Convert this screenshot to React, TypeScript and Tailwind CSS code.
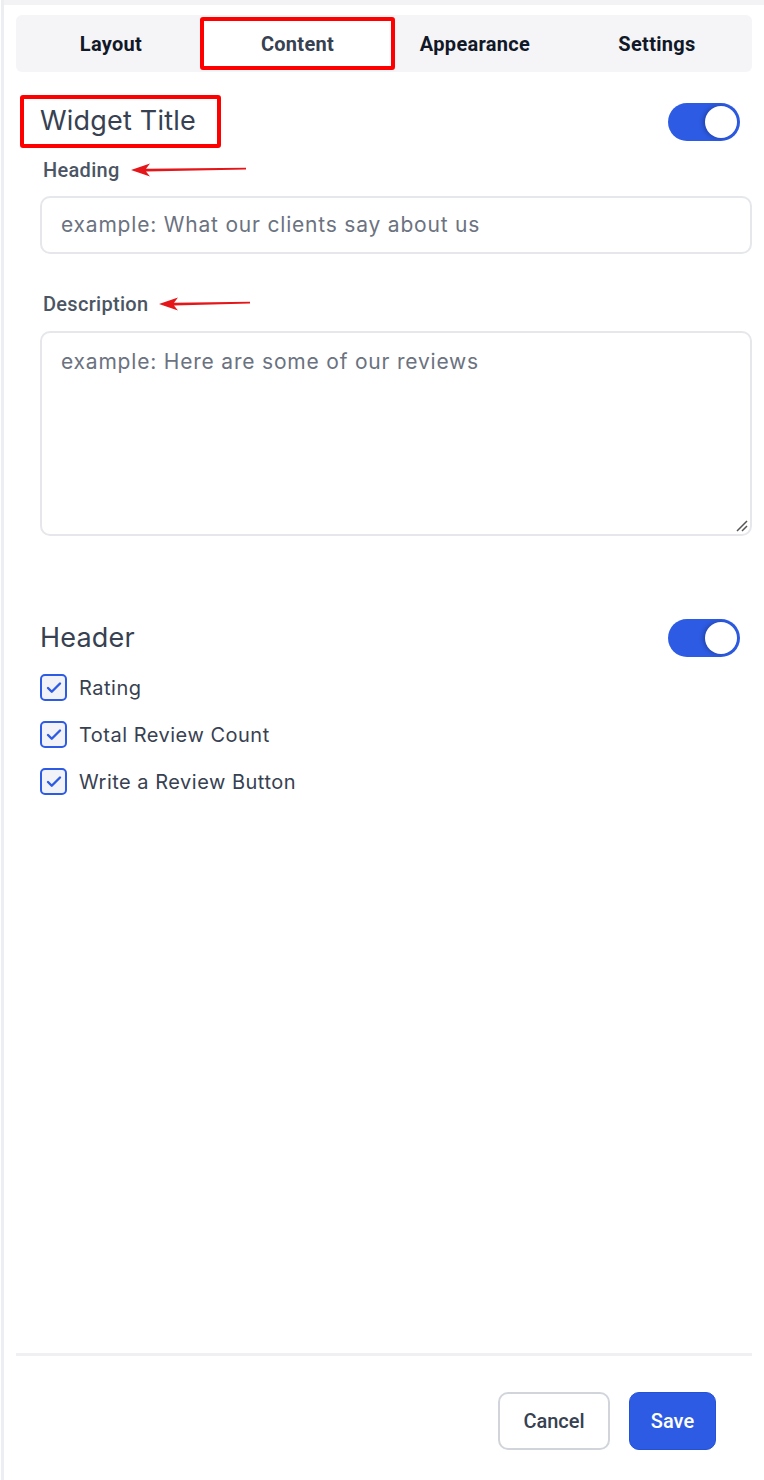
import { Check } from "lucide-react";

function Toggle() {
  return (
    <div className="w-[72px] h-[38px] rounded-full bg-[#2d5be3] flex items-center justify-end px-[3px]">
      <div className="w-[32px] h-[32px] rounded-full bg-white shadow-[-2px_0_4px_rgba(0,0,0,0.25)]" />
    </div>
  );
}

function Arrow({ width }: { width: number }) {
  return (
    <svg width={width} height="16" viewBox={`0 0 ${width} 16`} className="ml-[10px]">
      <path d={`M1 8 L20 1.5 L16 6.8 L${width} 5.8 L${width} 7.6 L16 9.4 L20 14.5 Z`} fill="#e5161a" />
    </svg>
  );
}

function CheckItem({ label }: { label: string }) {
  return (
    <div className="flex items-center gap-[12px] h-[26px]">
      <div className="w-[27px] h-[27px] rounded-[5px] border-2 border-[#2d5be3] bg-[#f1f3f9] flex items-center justify-center">
        <Check className="w-[18px] h-[18px] text-[#2d5be3]" strokeWidth={3.2} />
      </div>
      <span className="text-[20px] tracking-[0.5px] text-[#374151] font-['Inter',sans-serif]">{label}</span>
    </div>
  );
}

export default function App() {
  const tabs = ["Layout", "Content", "Appearance", "Settings"];
  return (
    <div className="w-[764px] h-[1480px] bg-white flex font-['Roboto',sans-serif]">
      <div className="w-[3px] bg-[#eceef2] ml-[1px]" />
      <div className="flex-1 flex flex-col border-t-[5px] border-[#f3f3f5] pl-[12px] pr-[12px]">
        <div className="mt-[10px] h-[57px] bg-[#f5f5f8] rounded-[6px] grid grid-cols-4 items-center px-[4px]">
          {tabs.map((t) =>
            t === "Content" ? (
              <div key={t} className="-ml-[2px] -mr-[11px] h-[53px] border-[4px] border-[#ff0000] rounded-[3px] bg-white flex items-center justify-center pt-[1px] text-[20px] tracking-[0.3px] font-bold text-[#374151]">
                {t}
              </div>
            ) : (
              <div key={t} className="text-center pt-[1px] text-[20px] tracking-[0.3px] font-bold text-[#111827]">
                {t}
              </div>
            )
          )}
        </div>

        <div className="mt-[31px] flex items-start justify-between pr-[12px]">
          <div className="ml-[4px] -mt-[8px] border-[4px] border-[#ff0000] rounded-[3px] pl-[16px] pr-[21px] h-[53px] flex items-center text-[27px] tracking-[0.2px] text-[#374151] font-['Inter',sans-serif]">
            Widget Title
          </div>
          <Toggle />
        </div>

        <div className="ml-[24px] flex flex-col">
          <div className="flex items-center mt-[10px] h-[24px] ml-[3px]">
            <span className="text-[20px] tracking-[0.3px] font-medium text-[#4b5563]">Heading</span>
            <Arrow width={116} />
          </div>
          <div className="mt-[14px] h-[58px] border-2 border-[#e5e7eb] rounded-[10px] flex items-center px-[19px] text-[21px] tracking-[0.8px] text-[#6b7280] font-['Inter',sans-serif]">
            example: What our clients say about us
          </div>

          <div className="flex items-center mt-[38px] h-[24px] ml-[3px]">
            <span className="text-[20px] tracking-[0.3px] font-medium text-[#4b5563]">Description</span>
            <Arrow width={92} />
          </div>
          <div className="relative mt-[15px] h-[205px] border-2 border-[#e5e7eb] rounded-[10px] px-[19px] pt-[13px] text-[21px] tracking-[0.8px] text-[#6b7280] font-['Inter',sans-serif]">
            example: Here are some of our reviews
            <svg className="absolute right-[2px] bottom-[2px]" width="14" height="14" viewBox="0 0 14 14">
              <path d="M13 3 L3 13 M13 8 L8 13" stroke="#555" strokeWidth="1.5" />
            </svg>
          </div>

          <div className="mt-[82px] flex items-center justify-between pr-[12px]">
            <span className="text-[27px] tracking-[0.2px] text-[#374151] font-['Inter',sans-serif]">Header</span>
            <Toggle />
          </div>

          <div className="mt-[16px] flex flex-col gap-[21px]">
            <CheckItem label="Rating" />
            <CheckItem label="Total Review Count" />
            <CheckItem label="Write a Review Button" />
          </div>
        </div>

        <div className="flex-1" />

        <div className="h-[3px] bg-[#f0f0f2]" />
        <div className="flex justify-end gap-[19px] pr-[36px] pt-[36px] pb-[30px]">
          <button className="w-[112px] h-[58px] rounded-[10px] border-2 border-[#d1d5db] bg-white text-[20px] font-medium text-[#374151]">
            Cancel
          </button>
          <button className="w-[87px] h-[58px] rounded-[10px] bg-[#2d5be3] border border-[#2451d6] text-[20px] font-medium text-white">
            Save
          </button>
        </div>
      </div>
    </div>
  );
}
